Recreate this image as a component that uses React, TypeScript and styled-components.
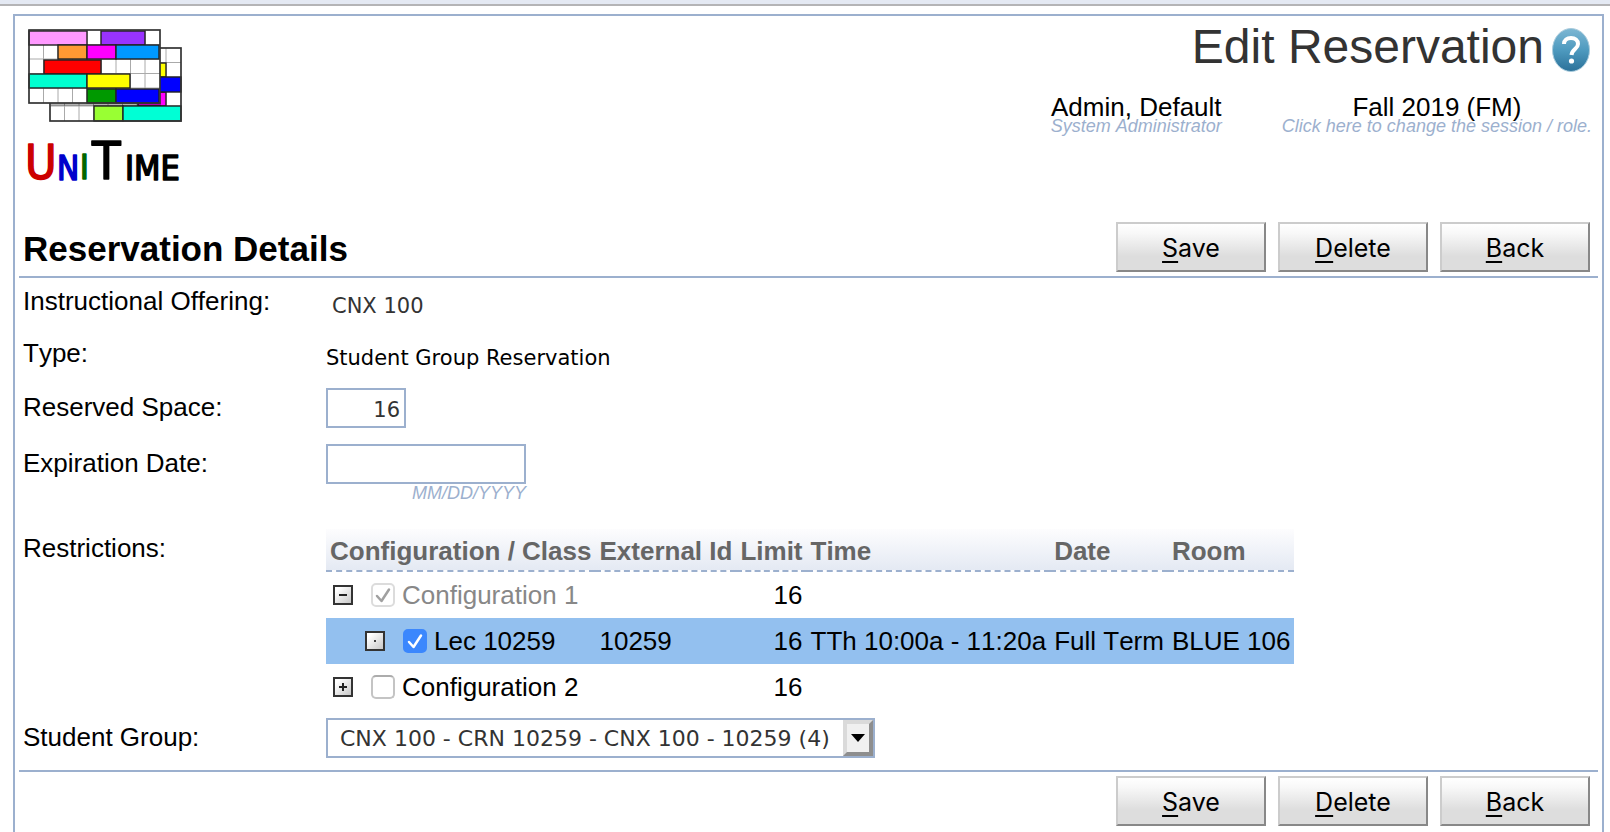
import React, { useState } from "react";
import styled, { createGlobalStyle } from "styled-components";

const line = "#9cb0ce";
const sans = '"Liberation Sans", Arial, sans-serif';
const verdana = '"DejaVu Sans", Verdana, sans-serif';

const GlobalStyle = createGlobalStyle`
  *, *::before, *::after { box-sizing: border-box; }
  body {
    margin: 0;
    background: #fff;
    color: #000;
    font: 26px/30px ${sans};
    font-kerning: none;
  }
`;

const Page = styled.div`
  display: flex;
  flex-direction: column;
  min-height: 100vh;
`;

const MenuStrip = styled.div`
  height: 6px;
  margin-bottom: 8px;
  background: #e4e9f3;
  border-bottom: 2px solid #b4b4b6;
`;

const Frame = styled.div`
  flex: 1;
  margin: 0 6px 0 13px;
  padding: 0 4px;
  border: 2px solid ${line};
  border-bottom: 0;
`;

const Header = styled.header`
  display: flex;
  justify-content: space-between;
  align-items: flex-start;
  padding-bottom: 35px;
`;

const Logo = styled.svg`
  display: block;
  width: 160px;
  height: 160px;
  margin: 11px 0 0 6px;
  overflow: visible;
`;

const HeaderInfo = styled.div`
  display: flex;
  flex-direction: column;
  align-items: flex-end;
  padding-top: 3px;
`;

const TitleLine = styled.div`
  display: flex;
  align-items: center;
  gap: 8px;
  padding-right: 8px;
`;

const Title = styled.h1`
  margin: 0;
  font-size: 48px;
  font-weight: 400;
  line-height: 56px;
  color: #333;
`;

const HelpLink = styled.a`
  display: block;
  width: 38px;
  height: 44px;
  margin-top: 6px;
`;

const Accounts = styled.div`
  display: flex;
  gap: 60px;
  margin-top: 22px;
  padding-right: 6px;
`;

const Account = styled.a`
  display: flex;
  flex-direction: column;
  color: #000;
  line-height: 20px;
  text-align: center;
  text-decoration: none;
`;

const Hint = styled.span`
  color: ${line};
  font-size: 18px;
  font-style: italic;
  line-height: 18px;
  text-align: right;
`;

const Bar = styled.div<{ $end?: boolean }>`
  display: flex;
  align-items: center;
  justify-content: ${(p) => (p.$end ? "flex-end" : "space-between")};
  padding: 4px 8px 4px 4px;
  ${(p) => (p.$end ? "border-top" : "border-bottom")}: 2px solid ${line};
  ${(p) => (p.$end ? "margin-top: 12px;" : "padding-top: 0;")}
`;

const SectionTitle = styled.h2`
  margin: 0;
  padding-top: 4px;
  font-size: 35px;
  line-height: 40px;
`;

const Buttons = styled.div`
  display: flex;
  gap: 12px;
`;

const Button = styled.button`
  width: 150px;
  height: 50px;
  padding: 2px 0 0;
  border: 2px solid;
  border-color: #ccc #888 #888 #ccc;
  background: linear-gradient(#fff 0%, #f8f8f8 20%, #ddd 70%, #ddd 100%);
  color: #000;
  font: 25px/30px Inter, sans-serif;
  cursor: pointer;
`;

const AccessKey = styled.span`
  text-decoration: underline;
  text-decoration-thickness: 2px;
  text-underline-offset: 4px;
  text-decoration-skip-ink: none;
`;

const Form = styled.div`
  display: flex;
  flex-direction: column;
  gap: 4px;
  padding: 4px 0 0 4px;
`;

const Row = styled.div<{ $height: number }>`
  display: grid;
  grid-template-columns: 303px minmax(0, 1fr);
  align-items: start;
  min-height: ${(p) => p.$height}px;
`;

const Label = styled.label`
  padding-top: 4px;
`;

const Value = styled.div<{ $inset?: boolean }>`
  padding-left: ${(p) => (p.$inset ? 6 : 0)}px;
  color: ${(p) => (p.$inset ? "#333" : "#000")};
  font: 21px/48px ${verdana};
`;

const Field = styled.div`
  display: flex;
  flex-direction: column;
  width: 200px;
`;

const TextBox = styled.input<{ $short?: boolean }>`
  width: ${(p) => (p.$short ? 80 : 200)}px;
  height: 40px;
  padding: 3px 4px 0;
  border: 2px solid ${line};
  border-radius: 0;
  background: #fff;
  color: #333;
  font: 21px/30px ${verdana};
  text-align: ${(p) => (p.$short ? "right" : "left")};
`;

const Table = styled.table`
  justify-self: start;
  border-collapse: separate;
  border-spacing: 0;
  white-space: nowrap;
`;

const HeadCell = styled.th`
  height: 43px;
  padding: 2px 4px 0;
  border-bottom: 2px dashed ${line};
  background: linear-gradient(#fdfdfe, #e4e9f3);
  color: #666;
  font-weight: 700;
  text-align: left;
`;

const BodyRow = styled.tr<{ $selected?: boolean }>`
  background: ${(p) => (p.$selected ? "#93c0ef" : "transparent")};
`;

const Cell = styled.td<{ $right?: boolean }>`
  height: 46px;
  padding: 0 4px;
  text-align: ${(p) => (p.$right ? "right" : "left")};
`;

const Node = styled.div<{ $level: number }>`
  display: flex;
  align-items: center;
  padding-left: ${(p) => 3 + p.$level * 32}px;
`;

const Toggle = styled.button`
  width: 20px;
  height: 20px;
  margin-right: 18px;
  padding: 0;
  border: 0;
  background: none;
  svg { display: block; }
`;

const NodeLabel = styled.label<{ $muted?: boolean }>`
  display: flex;
  align-items: center;
  gap: 7px;
  color: ${(p) => (p.$muted ? "#888" : "#000")};
`;

const CheckBox = styled.span`
  display: grid;
  width: 24px;
  height: 24px;
  > * { grid-area: 1 / 1; }
`;

const CheckInput = styled.input`
  appearance: none;
  width: 24px;
  height: 24px;
  margin: 0;
  border: 2px solid #c4c4c4;
  border-top-color: #acacac;
  border-radius: 5px;
  background: #fff;
  &:checked { border-color: #3b87fd; background: #3b87fd; }
  &:disabled { border-color: #dcdcdc; background: #fff; }
`;

const SelectBox = styled.div`
  position: relative;
  justify-self: start;
`;

const Select = styled.select`
  display: block;
  appearance: none;
  height: 40px;
  padding: 2px 43px 0 12px;
  border: 2px solid ${line};
  border-radius: 0;
  background: #fff;
  color: #333;
  font: 22px/30px ${verdana};
`;

const SelectArrow = styled.span`
  position: absolute;
  top: 2px;
  right: 2px;
  display: flex;
  align-items: center;
  justify-content: center;
  width: 30px;
  height: 36px;
  border: 4px solid;
  border-color: #dadada #8e8e8e #8e8e8e #dadada;
  background: #f0f0f0;
  pointer-events: none;
`;

type Block = [number, number, number, number, string];

const backBlocks: Block[] = [
  [145, 63, 21, 14, "#ff0"],
  [138, 92, 28, 14, "#f0f"],
  [152, 77, 29, 15, "#00f"],
  [94, 106, 29, 15, "#9f3"],
  [123, 106, 58, 15, "#00ffd5"],
];

const frontBlocks: Block[] = [
  [29, 31, 58, 14, "#f9f"],
  [101, 31, 44, 14, "#93f"],
  [58, 45, 29, 14, "#f93"],
  [87, 45, 29, 14, "#f0f"],
  [116, 45, 43, 14, "#09f"],
  [44, 60, 57, 14, "#f00"],
  [29, 74, 58, 14, "#00ffd0"],
  [87, 74, 43, 14, "#ff0"],
  [87, 89, 29, 14, "#090"],
  [116, 89, 43, 14, "#00f"],
];

const columns = [1, 2, 3, 4, 5, 6, 7, 8];
const rows = [1, 2, 3, 4];

function Grid({ x, y, blocks }: { x: number; y: number; blocks: Block[] }) {
  return (
    <g>
      <rect x={x} y={y} width="131" height="73" fill="#fff" />
      <g stroke="#aaa" strokeWidth="1">
        {columns.map((c) => (
          <line key={c} x1={x + c * 14.5} x2={x + c * 14.5} y1={y} y2={y + 73} />
        ))}
        {rows.map((r) => (
          <line key={r} x1={x} x2={x + 131} y1={y + r * 14.5} y2={y + r * 14.5} />
        ))}
      </g>
      {blocks.map(([bx, by, w, h, fill], i) => (
        <rect key={i} x={bx} y={by} width={w} height={h} fill={fill} stroke="#222" strokeWidth="1.4" />
      ))}
      <rect x={x} y={y} width="131" height="73" fill="none" stroke="#333" strokeWidth="1.7" />
    </g>
  );
}

function UniTimeLogo() {
  return (
    <Logo viewBox="25 27 160 160" role="img" aria-label="UniTime">
      <Grid x={50} y={48} blocks={backBlocks} />
      <rect x="51" y="103" width="110" height="3" fill="#000" opacity="0.3" />
      <Grid x={29} y={30} blocks={frontBlocks} />
      <g fontFamily='"DejaVu Sans Condensed", "DejaVu Sans", sans-serif' strokeWidth="1.5" strokeLinejoin="round">
        <text x="25" y="179" fontSize="48" fill="#c00" stroke="#c00">U</text>
        <text x="57" y="180" fontSize="33" fill="#00c" stroke="#00c">N</text>
        <text x="80" y="179" fontSize="33" fill="#060" stroke="#060">I</text>
        <text x="92" y="179" fontSize="52" fill="#000" stroke="#000">T</text>
        <text x="125" y="180" fontSize="34" fill="#000" stroke="#000">IME</text>
      </g>
    </Logo>
  );
}

function HelpIcon() {
  return (
    <svg width="38" height="44" viewBox="0 0 38 44" aria-hidden="true">
      <defs>
        <linearGradient id="help" x1="0" y1="0" x2="0" y2="1">
          <stop offset="0" stopColor="#7db7d3" />
          <stop offset="0.5" stopColor="#4e9abf" />
          <stop offset="1" stopColor="#2b7199" />
        </linearGradient>
      </defs>
      <ellipse cx="19" cy="22" rx="18.5" ry="21.5" fill="url(#help)" stroke="#a9cbdc" />
      <path d="M12 16c0-4 3-6 7-6s7 2 7 6c0 5-6 5-6.500 11" fill="none" stroke="#fff" strokeWidth="4" />
      <ellipse cx="19.500" cy="33" rx="2.600" ry="2.600" fill="#fff" />
    </svg>
  );
}

type NodeState = "open" | "closed" | "leaf";

function NodeIcon({ state }: { state: NodeState }) {
  return (
    <svg width="20" height="20" viewBox="0 0 20 20" aria-hidden="true">
      <defs>
        <linearGradient id="node" x1="0" y1="0" x2="1" y2="1">
          <stop offset="0.2" stopColor="#fff" />
          <stop offset="1" stopColor="#c4c4c4" />
        </linearGradient>
      </defs>
      <rect x="1" y="1" width="18" height="18" fill="url(#node)" stroke="#333" strokeWidth="2" />
      {state === "leaf" ? (
        <rect x="9" y="9" width="2" height="2" fill="#444" />
      ) : (
        <path d={state === "open" ? "M6 10h8" : "M6 10h8M10 6v8"} stroke="#222" strokeWidth="2" />
      )}
    </svg>
  );
}

interface ClassRow {
  id: string;
  name: string;
  level: number;
  state: NodeState;
  disabled?: boolean;
  externalId?: string;
  limit: number;
  time?: string;
  date?: string;
  room?: string;
}

const classRows: ClassRow[] = [
  { id: "config1", name: "Configuration 1", level: 0, state: "open", disabled: true, limit: 16 },
  {
    id: "lec", name: "Lec 10259", level: 1, state: "leaf", externalId: "10259", limit: 16,
    time: "TTh 10:00a - 11:20a", date: "Full Term", room: "BLUE 106",
  },
  { id: "config2", name: "Configuration 2", level: 0, state: "closed", limit: 16 },
];

function Restrictions() {
  const [checked, setChecked] = useState<Record<string, boolean>>({ config1: true, lec: true });
  return (
    <Table aria-labelledby="restrictions">
      <thead>
        <tr>
          {["Configuration / Class", "External Id", "Limit", "Time", "Date", "Room"].map((h) => (
            <HeadCell key={h} scope="col">{h}</HeadCell>
          ))}
        </tr>
      </thead>
      <tbody>
        {classRows.map((r) => (
          <BodyRow key={r.id} $selected={checked[r.id] && !r.disabled}>
            <Cell>
              <Node $level={r.level}>
                <Toggle type="button" aria-label={`${r.name} details`}>
                  <NodeIcon state={r.state} />
                </Toggle>
                <NodeLabel htmlFor={r.id} $muted={r.disabled}>
                  <CheckBox>
                    <CheckInput
                      id={r.id}
                      type="checkbox"
                      checked={!!checked[r.id]}
                      disabled={r.disabled}
                      onChange={(e) => setChecked({ ...checked, [r.id]: e.target.checked })}
                    />
                    {checked[r.id] && (
                      <svg width="24" height="24" viewBox="0 0 24 24" aria-hidden="true">
                        <path
                          d="M6 13l4.500 5L18 6.500"
                          fill="none"
                          stroke={r.disabled ? "#a0a0a0" : "#fff"}
                          strokeWidth="2.500"
                          strokeLinecap="round"
                          strokeLinejoin="round"
                        />
                      </svg>
                    )}
                  </CheckBox>
                  {r.name}
                </NodeLabel>
              </Node>
            </Cell>
            <Cell>{r.externalId}</Cell>
            <Cell $right>{r.limit}</Cell>
            <Cell>{r.time}</Cell>
            <Cell>{r.date}</Cell>
            <Cell>{r.room}</Cell>
          </BodyRow>
        ))}
      </tbody>
    </Table>
  );
}

function Actions() {
  return (
    <Buttons>
      {["Save", "Delete", "Back"].map((name) => (
        <Button key={name} type="button">
          <AccessKey>{name[0]}</AccessKey>
          {name.slice(1)}
        </Button>
      ))}
    </Buttons>
  );
}

export default function App() {
  return (
    <Page>
      <GlobalStyle />
      <MenuStrip />
      <Frame>
        <Header>
          <UniTimeLogo />
          <HeaderInfo>
            <TitleLine>
              <Title>Edit Reservation</Title>
              <HelpLink href="#help" aria-label="Help">
                <HelpIcon />
              </HelpLink>
            </TitleLine>
            <Accounts>
              <Account href="#user">
                Admin, Default
                <Hint>System Administrator</Hint>
              </Account>
              <Account href="#session">
                Fall 2019 (FM)
                <Hint>Click here to change the session / role.</Hint>
              </Account>
            </Accounts>
          </HeaderInfo>
        </Header>
        <main>
          <Bar>
            <SectionTitle>Reservation Details</SectionTitle>
            <Actions />
          </Bar>
          <Form>
            <Row $height={48}>
              <Label as="span">Instructional Offering:</Label>
              <Value $inset>CNX 100</Value>
            </Row>
            <Row $height={50}>
              <Label as="span">Type:</Label>
              <Value>Student Group Reservation</Value>
            </Row>
            <Row $height={52}>
              <Label htmlFor="space">Reserved Space:</Label>
              <TextBox id="space" type="text" $short defaultValue="16" />
            </Row>
            <Row $height={81}>
              <Label htmlFor="expiration">Expiration Date:</Label>
              <Field>
                <TextBox id="expiration" type="text" />
                <Hint>MM/DD/YYYY</Hint>
              </Field>
            </Row>
            <Row $height={185}>
              <Label as="span" id="restrictions">Restrictions:</Label>
              <Restrictions />
            </Row>
            <Row $height={40}>
              <Label htmlFor="group">Student Group:</Label>
              <SelectBox>
                <Select id="group">
                  <option>CNX 100 - CRN 10259 - CNX 100 - 10259 (4)</option>
                </Select>
                <SelectArrow>
                  <svg width="14" height="8" viewBox="0 0 14 8" aria-hidden="true">
                    <path d="M0 0h14L7 8z" fill="#000" />
                  </svg>
                </SelectArrow>
              </SelectBox>
            </Row>
          </Form>
          <Bar $end>
            <Actions />
          </Bar>
        </main>
      </Frame>
    </Page>
  );
}
